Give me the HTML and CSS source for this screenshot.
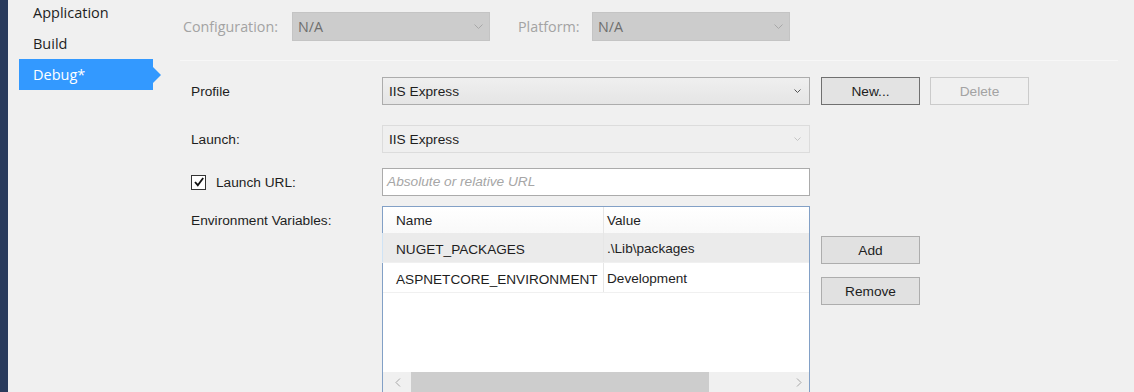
FILE: index.html
```html
<!DOCTYPE html>
<html lang="en">
<head>
    <meta charset="UTF-8">
    <title>Project Properties - Debug</title>
    <link rel="stylesheet" href="styles.css">
</head>
<body>
    <div class="window">
        <div class="strip"></div>
        <ul class="side-nav">
            <li class="nav-item">Application</li>
            <li class="nav-item">Build</li>
            <li class="nav-item active">Debug*</li>
        </ul>
        <div class="page">
            <div class="config-bar">
                <span class="config-label">Configuration:</span>
                <div class="config-select config-select-wide">
                    <span>N/A</span>
                    <svg class="chev" width="9" height="6" viewBox="0 0 9 6"><polyline points="0.5,0.5 4.5,4.5 8.5,0.5" fill="none" stroke="#a8a8a8" stroke-width="1"/></svg>
                </div>
                <span class="config-label platform-label">Platform:</span>
                <div class="config-select config-select-wide">
                    <span>N/A</span>
                    <svg class="chev" width="9" height="6" viewBox="0 0 9 6"><polyline points="0.5,0.5 4.5,4.5 8.5,0.5" fill="none" stroke="#a8a8a8" stroke-width="1"/></svg>
                </div>
            </div>
            <div class="divider"></div>

            <div class="form">
                <div class="row row-profile">
                    <label class="field-label">Profile</label>
                    <div class="combo">
                        <span>IIS Express</span>
                        <svg class="chev" width="7" height="5" viewBox="0 0 7 5"><polyline points="0.5,0.5 3.5,3.5 6.5,0.5" fill="none" stroke="#555" stroke-width="1"/></svg>
                    </div>
                    <button type="button" class="btn btn-default">New...</button>
                    <button type="button" class="btn" disabled>Delete</button>
                </div>

                <div class="row row-launch">
                    <label class="field-label">Launch:</label>
                    <div class="combo combo-disabled">
                        <span>IIS Express</span>
                        <svg class="chev" width="7" height="5" viewBox="0 0 7 5"><polyline points="0.5,0.5 3.5,3.5 6.5,0.5" fill="none" stroke="#c4c4c4" stroke-width="1"/></svg>
                    </div>
                </div>

                <div class="row row-url">
                    <label class="field-label check-label">
                        <span class="checkbox">
                            <svg width="12" height="12" viewBox="0 0 12 12"><polyline points="2,6 4.8,9.2 10.2,2" fill="none" stroke="#111" stroke-width="1.8"/></svg>
                        </span>
                        Launch URL:
                    </label>
                    <div class="textbox">Absolute or relative URL</div>
                </div>

                <div class="row row-env">
                    <label class="field-label">Environment Variables:</label>
                    <div class="listview">
                        <div class="lv-row lv-header">
                            <div class="lv-cell lv-name">Name</div>
                            <div class="lv-cell">Value</div>
                        </div>
                        <div class="lv-row lv-selected">
                            <div class="lv-cell lv-name">NUGET_PACKAGES</div>
                            <div class="lv-cell">.\Lib\packages</div>
                        </div>
                        <div class="lv-row">
                            <div class="lv-cell lv-name">ASPNETCORE_ENVIRONMENT</div>
                            <div class="lv-cell">Development</div>
                        </div>
                        <div class="lv-fill"></div>
                        <div class="hscroll">
                            <svg class="arrow" width="6" height="9" viewBox="0 0 6 9"><polyline points="5,0.5 1,4.5 5,8.5" fill="none" stroke="#a6a6a6" stroke-width="1"/></svg>
                            <div class="track"><div class="thumb"></div></div>
                            <svg class="arrow" width="6" height="9" viewBox="0 0 6 9"><polyline points="1,0.5 5,4.5 1,8.5" fill="none" stroke="#a6a6a6" stroke-width="1"/></svg>
                        </div>
                    </div>
                    <div class="env-buttons">
                        <button type="button" class="btn">Add</button>
                        <button type="button" class="btn">Remove</button>
                    </div>
                </div>
            </div>
        </div>
    </div>
</body>
</html>
```

FILE: styles.css
```css
html, body {
    margin: 0;
    padding: 0;
}
body {
    background: #f0f0f0;
    width: 1134px;
    height: 392px;
    overflow: hidden;
    font-family: "Liberation Sans", Arial, sans-serif;
    font-size: 13.7px;
    color: #1e1e1e;
}

.window {
    display: flex;
    height: 392px;
}
.strip {
    width: 8px;
    flex: none;
    background: #293b5c;
}

/* left navigation */
.side-nav {
    list-style: none;
    margin: -3px 0 0 0;
    padding: 0 0 0 11px;
    width: 161px;
    flex: none;
    font-family: "Open Sans", "Noto Sans", sans-serif;
    font-size: 14.5px;
}
.nav-item {
    position: relative;
    height: 31px;
    line-height: 31px;
    width: 120px;
    padding-left: 14px;
    color: #1e1e1e;
}
.nav-item.active {
    background: #3399ff;
    color: #fff;
}
.nav-item.active::after {
    content: "";
    position: absolute;
    right: -8px;
    top: 8px;
    border-left: 8px solid #3399ff;
    border-top: 8px solid transparent;
    border-bottom: 8px solid transparent;
}

.page {
    flex: 1;
    display: flex;
    flex-direction: column;
}

/* configuration / platform bar */
.config-bar {
    display: flex;
    align-items: center;
    height: 29px;
    margin-top: 12px;
    padding-left: 3px;
    font-family: "Open Sans", "Noto Sans", sans-serif;
    font-size: 14.3px;
}
.config-label {
    color: #a3a3a3;
    width: 109px;
}
.platform-label {
    width: 74px;
    margin-left: 28px;
}
.config-select {
    display: flex;
    align-items: center;
    justify-content: space-between;
    box-sizing: border-box;
    height: 29px;
    padding: 0 6px 0 5px;
    background: #cccccc;
    border: 1px solid #c4c4c4;
    color: #6e6e6e;
}
.config-select-wide {
    width: 198px;
}
.divider {
    height: 2px;
    margin: 19px 16px 0 0;
    background: #a8a8a8;
    border-bottom: 1px solid #f7f7f7;
    box-sizing: border-box;
}

/* form */
.form {
    padding-left: 11px;
    display: flex;
    flex-direction: column;
}
.row {
    display: flex;
    align-items: center;
}
.row-profile { margin-top: 16px; }
.row-launch { margin-top: 20px; }
.row-url { margin-top: 15px; }
.row-env {
    margin-top: 10px;
    align-items: flex-start;
}
.field-label {
    width: 191px;
    flex: none;
}
.row-env .field-label {
    margin-top: 7px;
}

.combo {
    display: flex;
    align-items: center;
    justify-content: space-between;
    box-sizing: border-box;
    width: 428px;
    height: 28px;
    padding: 0 8px 0 6px;
    border: 1px solid #acacac;
    background: linear-gradient(#efefef, #e5e5e5);
}
.combo-disabled {
    border-color: #dcdcdc;
    background: #efefef;
}

.check-label {
    display: flex;
    align-items: center;
}
.checkbox {
    display: inline-flex;
    align-items: center;
    justify-content: center;
    width: 13px;
    height: 13px;
    margin-right: 10px;
    background: #fff;
    border: 1px solid #333;
}
.textbox {
    box-sizing: border-box;
    width: 428px;
    height: 28px;
    line-height: 26px;
    padding-left: 4px;
    background: #fff;
    border: 1px solid #ababab;
    color: #a6a6a6;
    font-style: italic;
}

.btn {
    box-sizing: border-box;
    width: 99px;
    height: 28px;
    margin-left: 11px;
    padding: 0;
    font-family: "Liberation Sans", Arial, sans-serif;
    font-size: 13.7px;
    color: #1e1e1e;
    background: #e1e1e1;
    border: 1px solid #adadad;
}
.btn + .btn {
    margin-left: 10px;
}
.btn-default {
    border-color: #707070;
    background: #e3e3e3;
}
.btn:disabled {
    background: #f0f0f0;
    border-color: #cbcbcb;
    color: #a3a3a3;
}

/* environment variables list */
.listview {
    box-sizing: border-box;
    width: 428px;
    height: 187px;
    flex: none;
    display: flex;
    flex-direction: column;
    background: #fff;
    border: 1px solid #82a0c6;
    font-size: 13.6px;
}
.lv-row {
    display: flex;
    height: 29px;
    align-items: center;
    border-bottom: 1px solid #f0f0f0;
}
.lv-header {
    height: 26px;
    border-bottom: none;
    background: linear-gradient(#ffffff, #f9f9f9);
}
.lv-selected {
    background: #ebebeb;
    border-left: 1px solid #cfe3f5;
    margin-left: -1px;
}
.lv-cell {
    padding-left: 4px;
    white-space: nowrap;
}
.lv-name {
    width: 221px;
    padding-left: 13px;
    box-sizing: border-box;
    height: 100%;
    display: flex;
    align-items: center;
    border-right: 1px solid #e6e6e6;
}
.lv-row:not(.lv-header) .lv-cell {
    padding-top: 2px;
}
.lv-row:not(.lv-header) .lv-name {
    padding-top: 3px;
}
.lv-header .lv-cell:last-child {
    padding-left: 6px;
}
.lv-row .lv-cell:last-child {
    padding-left: 3px;
}
.lv-fill {
    flex: 1;
}
.hscroll {
    display: flex;
    align-items: center;
    height: 20px;
    background: #f0f0f0;
}
.hscroll .arrow {
    flex: none;
    margin: 0 10px 0 12px;
}
.hscroll .arrow:last-child {
    margin: 0 7px 0 10px;
}
.track {
    flex: 1;
    height: 20px;
}
.thumb {
    width: 298px;
    height: 20px;
    background: #cdcdcd;
}

.env-buttons {
    display: flex;
    flex-direction: column;
    margin-top: 30px;
}
.env-buttons .btn {
    margin-left: 11px;
}
.env-buttons .btn + .btn {
    margin-top: 13px;
    margin-left: 11px;
}
```
